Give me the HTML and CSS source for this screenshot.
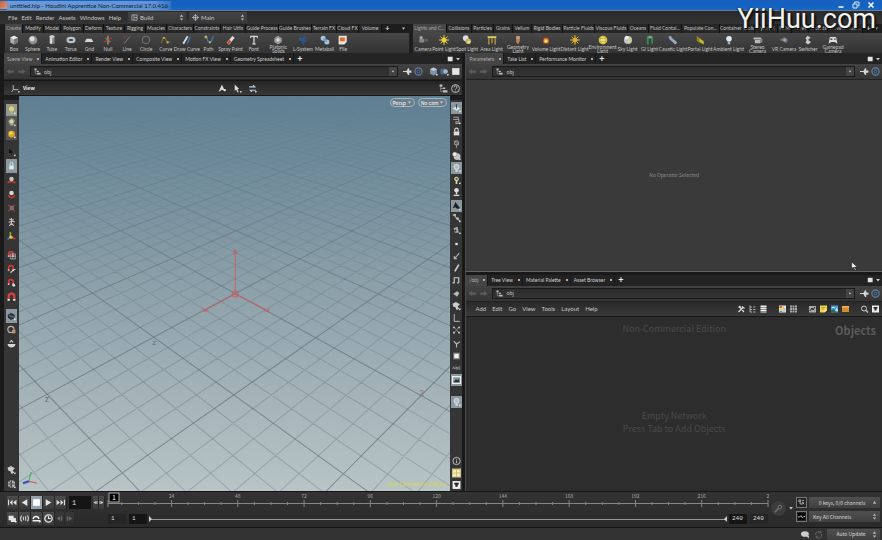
FILE: index.html
```html
<!DOCTYPE html>
<html lang="en">
<head>
<meta charset="utf-8">
<title>untitled.hip - Houdini Apprentice Non-Commercial 17.0.416</title>
<link rel="stylesheet" href="styles.css">
</head>
<body>
<header class="titlebar">
  <span class="app-icon"></span>
  <h1>untitled.hip - Houdini Apprentice Non-Commercial 17.0.416</h1>
  <div class="window-buttons">
    <button aria-label="Minimize" data-icon="min"></button>
    <button aria-label="Restore" data-icon="restore"></button>
    <button aria-label="Close" data-icon="close"></button>
  </div>
</header>
<nav class="menubar">
  <div class="menus">
    <button>File</button><button>Edit</button><button>Render</button><button>Assets</button><button>Windows</button><button>Help</button>
  </div>
  <button class="combo"><i data-icon="layout"></i><span>Build</span><i data-icon="spin"></i></button>
  <button class="combo"><i data-icon="target"></i><span>Main</span><i data-icon="spin"></i></button>
</nav>
<section class="shelves">
  <div class="shelf shelf-create">
    <div class="shelf-tabs" id="tabs-create"></div>
    <div class="shelf-tools" id="tools-create"></div>
  </div>
  <div class="shelf shelf-lights">
    <div class="shelf-tabs" id="tabs-lights"></div>
    <div class="shelf-tools" id="tools-lights"></div>
  </div>
</section>
<main class="desktop">
  <section class="pane scene">
    <div class="pane-tabs">
      <button class="on">Scene View</button><button>Animation Editor</button><button>Render View</button><button>Composite View</button><button>Motion FX View</button><button>Geometry Spreadsheet</button>
      <b class="plus">+</b><span class="pane-ctl"><i data-icon="square"></i><i data-icon="down"></i></span>
    </div>
    <div class="path">
      <i data-icon="back"></i><i data-icon="fwd"></i>
      <label class="path-box"><i data-icon="objnet"></i><input value="obj" aria-label="Scene path"><i class="drop" data-icon="down"></i></label>
      <i data-icon="pin"></i><i data-icon="ring"></i>
      <span class="path-tools"><i data-icon="cube"></i><i data-icon="cube2"></i><i data-icon="square"></i></span>
    </div>
    <div class="viewbar">
      <i data-icon="axes"></i><b>View</b>
      <span class="viewbar-mid"><i data-icon="snapA"></i><i data-icon="cursor"></i><i data-icon="swap"></i></span>
      <i data-icon="objnet"></i><i data-icon="help"></i>
    </div>
    <div class="view-row">
      <div class="toolbar toolbar-left" id="toolbar-left"></div>
      <div class="viewport">
        <svg id="grid" class="grid" viewBox="19 96 431 395" preserveAspectRatio="xMidYMid slice" aria-hidden="true"></svg>
        <div class="camera-menus"><button>Persp<i data-icon="down"></i></button><button>No cam<i data-icon="down"></i></button></div>
        <p class="license">Non-Commercial Edition</p>
      </div>
      <div class="toolbar toolbar-right" id="toolbar-right"></div>
    </div>
  </section>
  <div class="side">
    <section class="pane params">
      <div class="pane-tabs">
        <button class="on">Parameters</button><button>Take List</button><button>Performance Monitor</button>
        <b class="plus">+</b><span class="pane-ctl"><i data-icon="square"></i><i data-icon="down"></i></span>
      </div>
      <div class="path">
        <i data-icon="back"></i><i data-icon="fwd"></i>
        <label class="path-box"><i data-icon="objnet"></i><input value="obj" aria-label="Parameter path"><i class="drop" data-icon="down"></i></label>
        <i data-icon="pin"></i><i data-icon="ring"></i>
      </div>
      <div class="params-body">No Operator Selected<i class="pointer" data-icon="pointer"></i></div>
    </section>
    <section class="pane network">
      <div class="pane-tabs">
        <button class="on">/obj</button><button>Tree View</button><button>Material Palette</button><button>Asset Browser</button>
        <b class="plus">+</b><span class="pane-ctl"><i data-icon="square"></i><i data-icon="down"></i></span>
      </div>
      <div class="path">
        <i data-icon="back"></i><i data-icon="fwd"></i>
        <label class="path-box"><i data-icon="objnet"></i><input value="obj" aria-label="Network path"><i class="drop" data-icon="down"></i></label>
        <i data-icon="pin"></i><i data-icon="ring"></i>
      </div>
      <div class="net-menu">
        <div class="menus"><button>Add</button><button>Edit</button><button>Go</button><button>View</button><button>Tools</button><button>Layout</button><button>Help</button></div>
        <div class="net-icons">
          <span><i data-icon="wrench"></i><i data-icon="tree"></i><i data-icon="list"></i></span>
          <span><i data-icon="colors"></i><i data-icon="dots"></i></span>
          <span><i data-icon="shape"></i><i data-icon="note"></i><i data-icon="image"></i><i data-icon="box3"></i></span>
          <span><i data-icon="search"></i><i data-icon="disk"></i></span>
        </div>
      </div>
      <div class="net-body">
        <p>Non-Commercial Edition</p>
        <h2>Objects</h2>
        <p class="hint">Empty Network<br>Press Tab to Add Objects</p>
      </div>
    </section>
  </div>
</main>
<footer class="playbar">
  <div class="transport">
    <div class="buttons">
      <button aria-label="First frame" data-icon="first"></button><button aria-label="Play back" data-icon="rev"></button><button class="on" aria-label="Stop" data-icon="stop"></button><button aria-label="Play" data-icon="play"></button><button aria-label="Last frame" data-icon="last"></button>
      <input class="num frame" value="1" aria-label="Current frame">
      <button class="step" aria-label="Step back" data-icon="stepb"></button><button class="step" aria-label="Step forward" data-icon="stepf"></button>
    </div>
    <div class="buttons">
      <button aria-label="Realtime" data-icon="hand"></button><button aria-label="Audio" data-icon="audio"></button><button aria-label="Loop" data-icon="loop"></button><button aria-label="Playback options" data-icon="clock"></button>
      <button class="dim" aria-label="Previous key" data-icon="stepb"></button><button class="dim" aria-label="Next key" data-icon="stepf"></button>
    </div>
  </div>
  <div class="time">
    <svg id="ruler" class="ruler"></svg>
    <div class="range">
      <input class="num flat" value="1" aria-label="Global start"><input class="num" value="1" aria-label="Range start">
      <span class="range-bar"></span>
      <input class="num" value="240" aria-label="Range end"><input class="num flat" value="240" aria-label="Global end">
    </div>
  </div>
  <div class="key"><i data-icon="key"></i><i data-icon="down"></i></div>
  <div class="channels">
    <button class="sq" aria-label="Scope channels" data-icon="scope"></button><button class="chan"><span>0 keys, 0/0 channels</span><i data-icon="up"></i></button>
    <button class="sq" aria-label="Channel list" data-icon="wave"></button><button class="chan left"><span>Key All Channels</span><i data-icon="spin"></i></button>
  </div>
</footer>
<div class="status"><i data-icon="bubble"></i><i data-icon="refresh"></i><button class="chan"><span>Auto Update</span><i data-icon="spin"></i></button></div>
<div class="brand">YiiHuu.com</div>
<script src="app.js"></script>
</body>
</html>
```
FILE: styles.css
```css
* { box-sizing: border-box; }
body {
  margin: 0; height: 100vh; display: flex; flex-direction: column; overflow: hidden; position: relative;
  background: #2d2d2d; color: #c6c6c6;
  font: 5px/8px "Noto Sans CJK SC", "Noto Sans", sans-serif;
}
button, input { font: inherit; color: inherit; background: none; border: 0; margin: 0; padding: 0; }
h1, h2, p { margin: 0; font: inherit; }
i { display: inline-flex; flex: none; width: 9px; height: 9px; }
i svg, button svg { display: block; width: 100%; height: 100%; }
.titlebar, .menubar, .menus, .shelves, .pane-tabs { font-family: Lato, "Noto Sans", sans-serif; }

.titlebar { height: 11px; flex: none; display: flex; align-items: center; background: linear-gradient(#1a5fbd, #1263c4 60%, #1c69c0); border-bottom: 1px solid #5f7d9c; }
.app-icon { width: 7px; height: 8px; background: linear-gradient(135deg, #c9603a, #d99a78); }
.titlebar h1 { padding: 0 3px; color: #0c1930; background: linear-gradient(90deg, #6d9bd6, #5f93d6 90%, #3275c6); font-size: 6px; line-height: 9px; }
.window-buttons { margin-left: auto; display: flex; gap: 7px; padding-right: 7px; height: 8px; }
.window-buttons button { width: 8px; height: 8px; }

.menubar { height: 13px; flex: none; display: flex; align-items: center; padding-left: 8px; gap: 3px; background: linear-gradient(#2a2a2a, #343434); font-size: 6px; }
.menus { display: flex; gap: 4px; font-size: 6px; }
.menubar .menus { width: 117px; }
.combo { width: 58px; height: 11px; padding: 0 1px 0 3px; display: flex; align-items: center; gap: 2px; background: linear-gradient(#444, #383838); border-radius: 1px; }
.combo span { flex: 1; text-align: left; }
.combo i { width: 7px; height: 7px; }

.shelves { height: 29px; flex: none; display: flex; background: #1d1d1d; padding-left: 5px; gap: 4px; }
.shelf { min-width: 0; display: flex; flex-direction: column; }
.shelf-create { flex: 404; }
.shelf-lights { flex: 469; }
.shelf-tabs, .shelf-tools { display: grid; }
.shelf-tabs { height: 9px; font-size: 5px; }
.shelf-tabs > * { height: 9px; line-height: 9px; white-space: nowrap; overflow: hidden; border-right: 1px solid #111; background: #262626; }
.shelf-tabs .on { background: #464646; color: #aaa; }
.shelf-tabs b { display: flex; align-items: center; justify-content: space-between; padding: 0 3px; border: 0; color: #ddd; font-size: 8px; background: #1d1d1d; }
.shelf-tabs b i { width: 5px; height: 5px; }
.shelf-tools { height: 20px; background: linear-gradient(#474747, #333); font-size: 5px; }
.shelf-tools button { min-width: 0; height: 20px; display: flex; flex-direction: column; align-items: center; line-height: 4px; white-space: nowrap; padding-top: 2px; gap: 2px; }
.shelf-tools button.two { gap: 0; }
.shelf-tools i { width: 10px; height: 10px; }
#tabs-create { grid-template-columns: 18fr 21fr 17fr 23fr 20fr 21fr 21fr 21fr 27fr 27fr 25fr 33fr 33fr 25fr 22fr 23fr 27fr; }
#tools-create { grid-template-columns: 18fr 19fr 19fr 19fr 18fr 19fr 19fr 19fr 20fr 22fr 21fr 23fr 23fr 26fr 23fr 20fr 17fr 57fr; }
#tabs-lights { grid-template-columns: 34fr 25fr 22fr 19fr 19fr 31fr 32fr 33fr 21fr 33fr 38fr 35fr 23fr 14fr 17fr 19fr 35fr 19fr; }
#tools-lights { grid-template-columns: 20fr 22fr 24fr 25fr 28fr 28fr 29fr 27fr 23fr 21fr 26fr 28fr 29fr 29fr 24fr 24fr 26fr 36fr; }

.desktop { flex: 1; min-height: 0; display: flex; gap: 3px; background: #191919; padding-left: 4px; border-bottom: 1px solid #161616; }
.pane { display: flex; flex-direction: column; min-height: 0; min-width: 0; }
.scene { flex: 459; }
.side { flex: 416; min-width: 0; display: flex; flex-direction: column; border-left: 1px solid #4a4a4a; }
.params { flex: 218; border-bottom: 1px solid #626262; }
.network { flex: 217; margin-top: 3px; }
.pane-tabs { height: 11px; flex: none; display: flex; align-items: center; background: #232323; color: #d0d0d0; }
.pane-tabs button { height: 11px; display: flex; align-items: center; gap: 5px; padding: 0 2px 0 3px; white-space: nowrap; border-right: 1px solid #171717; }
.pane-tabs button::after { content: ""; width: 2px; height: 2px; background: #aaa; }
.pane-tabs .on { background: #454545; color: #b0b0b0; }
.plus { font-size: 9px; padding-left: 3px; color: #eee; }
.pane-ctl { margin-left: auto; display: flex; gap: 2px; padding-right: 1px; }
.pane-ctl i { width: 6px; height: 6px; }
.path { height: 16px; flex: none; display: flex; align-items: center; gap: 2px; padding: 0 2px; background: linear-gradient(#424242, #353535); border-bottom: 1px solid #222; }
.path-box { flex: 1; min-width: 0; height: 11px; margin: 0 3px 0 2px; display: flex; align-items: center; gap: 3px; padding-left: 3px; border: 1px solid #191919; background: linear-gradient(#2c2c2c, #343434); }
.path-box input { flex: 1; min-width: 0; height: 8px; }
.path-box i { width: 7px; height: 7px; }
.path-box .drop { width: 8px; height: 9px; padding: 2px; background: #444; }
.path-tools { display: flex; gap: 2px; padding-left: 4px; }
.viewbar { height: 16px; flex: none; display: flex; align-items: center; gap: 3px; padding: 0 2px 0 7px; background: linear-gradient(#252525, #383838); border: solid #171717; border-width: 1px 0; }
.viewbar b { color: #eee; }
.viewbar-mid { flex: 1; display: flex; justify-content: center; gap: 6px; }
.view-row { flex: 1; min-height: 0; display: flex; }
.toolbar { flex: none; display: flex; flex-direction: column; background: #353535; border-top: 4px solid #1c1c1c; }
.toolbar button { display: block; width: 11px; padding: 1px; }
.toolbar button.on { background: #8b989e; }
.toolbar div:last-child { margin-top: auto; }
.toolbar-left { width: 15px; gap: 5px; padding: 4px 2px 0; }
.toolbar-left button { height: 14px; padding: 2px 1px; }
.toolbar-left div:first-child button { height: 12px; padding: 1px; background: #555; }
.toolbar-left div:first-child button.on { background: #939a8e; }
.toolbar-right { width: 12px; gap: 2px; padding: 2px 0 0 1px; }
.toolbar-right button { height: 12px; }
.toolbar-right div:nth-child(6) { padding-top: 8px; }
.viewport { flex: 1; min-width: 0; position: relative; background: linear-gradient(#5f8093, #8097a2 35%, #98aab1 62%, #b8c4c6); }
.grid { position: absolute; inset: 0; width: 100%; height: 100%; }
.minor { stroke: #4f6270; stroke-opacity: .3; fill: none; }
.major { stroke: #3a4a58; stroke-opacity: .45; fill: none; }
.axis { stroke: #d2585c; stroke-width: 1; stroke-opacity: .85; fill: none; }
.grid text { font-family: "Liberation Sans", sans-serif; fill: #555a7c; text-anchor: middle; }
.grid .warm { fill: #96606c; }
.camera-menus { position: absolute; top: 2px; right: 3px; display: flex; gap: 3px; }
.camera-menus button { height: 9px; display: flex; align-items: center; gap: 1px; padding: 0 2px; border: 1px solid #a5b4bd; border-radius: 5px; color: #fff; background: #6b7d88; }
.camera-menus i { width: 5px; height: 5px; }
.license { position: absolute; right: 5px; bottom: 3px; color: #dcdc3c; }

.params-body { flex: 1; display: flex; align-items: center; justify-content: center; background: #3a3a3a; color: #8c8c8c; position: relative; }
.pointer { position: absolute; right: 23px; bottom: 0; }
.net-menu { height: 15px; flex: none; display: flex; align-items: center; justify-content: space-between; padding: 0 2px 0 9px; background: linear-gradient(#2a2a2a, #393939); border-bottom: 1px solid #181818; }
.net-menu .menus { gap: 6px; }
.net-icons, .net-icons span { display: flex; gap: 2px; }
.net-icons { gap: 10px; }
.net-icons i { width: 9px; height: 8px; }
.net-body { flex: 1; background: #2d2d2d; color: #4a4a4a; position: relative; text-align: center; font-size: 9px; line-height: 13px; padding-top: 5px; }
.net-body h2 { position: absolute; right: 6px; top: 6px; font-weight: bold; font-size: 11px; line-height: 14px; color: #5b5b5b; }
.hint { padding-top: 74px; }

.playbar { height: 36px; flex: none; display: flex; padding: 4px 2px 0 7px; border-bottom: 1px solid #151515; background: linear-gradient(#333, #2a2a2a); }
.transport { display: flex; flex-direction: column; gap: 3px; width: 101px; flex: none; }
.buttons { display: flex; align-items: center; height: 13px; }
.buttons button { width: 12px; height: 13px; padding: 1px; background: linear-gradient(#4b4b4b, #3a3a3a); border-right: 1px solid #242424; }
.buttons .on { background: #93a3ae; }
.buttons .step { width: 6px; padding: 1px 0; }
.buttons .dim { width: 10px; opacity: .35; }
.num { width: 18px; height: 10px; background: #151515; color: #ddd; padding: 0 3px; font: 6px/10px "Liberation Mono", monospace; border: 0; }
.num.flat { background: #252525; }
.num.frame { width: 22px; height: 13px; margin: 0 2px; font-size: 7px; }
.time { flex: 1; min-width: 0; }
.ruler { display: block; width: 100%; height: 18px; overflow: visible; margin-top: -3px; }
.ruler line { stroke: #858585; }
.ruler text { fill: #aaa; text-anchor: middle; }
.range { display: flex; align-items: center; gap: 3px; height: 12px; padding-top: 2px; margin-top: 1px; }
.range-bar { flex: 1; height: 1px; background: #999; position: relative; }
.range-bar::before, .range-bar::after { content: ""; position: absolute; top: -3px; border: solid transparent; border-width: 3px 0; }
.range-bar::before { left: -1px; border-left: 3px solid #ccc; }
.range-bar::after { right: -1px; border-right: 3px solid #ccc; }
.key { width: 28px; flex: none; display: flex; align-items: center; justify-content: center; gap: 2px; height: 24px; }
.key i { width: 6px; height: 6px; }
.key i:first-child { width: 15px; height: 15px; }
.channels { display: grid; grid-template-columns: 11px 71px; gap: 3px 2px; height: 27px; padding: 1px 0; }
.sq { height: 11px; padding: 1px; border: 1px solid #777; background: #222; }
.chan { height: 11px; display: flex; align-items: center; background: linear-gradient(#505050, #404040); color: #dadada; border-radius: 1px; padding: 0 2px 0 4px; }
.chan span { flex: 1; }
.chan.left span { text-align: left; }
.chan i { width: 7px; height: 7px; }
.status { height: 12px; flex: none; display: flex; align-items: center; justify-content: flex-end; gap: 4px; padding-right: 2px; background: #333; }
.status .chan { width: 53px; }
.brand { position: absolute; right: 6px; top: 3px; font: 27px/32px Roboto, sans-serif; color: #f2f2f2; text-shadow: 1px 1px 1px #111, -1px 0 1px #222, 2px 2px 2px #111; }
```
FILE: app.js
```js
const g = 'stroke="#c4c4c4" fill="none" stroke-width="1.6"';
const tri = '<path fill="#fff" d="M12 13h4l-2 3z"/>';
const magnet = '<path d="M3 10V6a4 4 0 0 1 8 0v4" fill="none" stroke="#cf3a34" stroke-width="3"/><path d="M1.500 10h3M9.500 10h3" stroke="#ddd" stroke-width="2"/>';
const bulb = c => `<circle cx="8" cy="6" r="4.500" fill="${c}"/><path d="M6 10h4v5H6z" fill="#aab"/>`;
const rays = c => `<path stroke="${c}" stroke-width="1.600" d="M8 0v16M0 8h16M2.500 2.500l11 11M13.500 2.500l-11 11"/><circle cx="8" cy="8" r="4" fill="${c}"/>`;
const icons = {
  min: '<path d="M3 12h10" stroke="#fff" stroke-width="3"/>',
  restore: '<path d="M5 5V2h9v8h-3M2 6h8v8H2z" fill="none" stroke="#dce8f6" stroke-width="2"/>',
  close: '<path d="M3 3l10 10M13 3L3 13" stroke="#fff" stroke-width="3"/>',
  layout: `<path d="M2 2h12v12H2zM7 2v12M7 8h7" ${g}/>`,
  target: `<circle cx="8" cy="8" r="5" ${g}/><path d="M8 0v16M0 8h16" ${g}/>`,
  spin: '<path fill="#bbb" d="M8 1l4 5H4zM8 15l4-5H4z"/>',
  up: '<path fill="#aaa" d="M8 4l4 7H4z"/>',
  down: '<path fill="#ccc" d="M3 5h10l-5 7z"/>',
  square: '<path fill="#e4e4e4" d="M2 2h13v12H2z"/>',
  back: '<path fill="#5c5c5c" d="M1 8l6-5v3h7v4H7v3z"/>',
  fwd: '<path fill="#5c5c5c" d="M15 8L9 3v3H2v4h7v3z"/>',
  objnet: '<path fill="#bdbdbd" d="M1 1h5v4H1zM7 6h4v3H7zM7 11h8v4H7z"/><path d="M3 5v8h4M3 8h4" stroke="#bbb" fill="none"/>',
  pin: '<path fill="#d5d5d5" d="M0 7h6l3-5h2v4h4v4h-4v4H9L6 9H0z"/>',
  ring: '<circle cx="8" cy="8" r="6.500" fill="#36424f" stroke="#64809d" stroke-width="2"/><circle cx="8" cy="8" r="2.500" fill="none" stroke="#5a85b5"/>',
  cube: '<path fill="#7f94aa" d="M2 4l6-3 6 3v8l-6 3-6-3z"/><path fill="#c0ccd8" d="M2 4l6-3 6 3-6 3z"/>' + tri,
  cube2: '<path fill="#4c6d93" d="M1 3h9v10H1z"/><circle cx="10" cy="8" r="4" fill="#a9b5c2"/>' + tri,
  axes: `<path d="M4 2v8h9M4 10l-3 4" ${g}/>` + tri,
  snapA: '<path fill="#ddd" d="M7 1l5 11-5-2-6 4z"/><circle cx="12" cy="11" r="2" fill="#eee"/>',
  cursor: '<path fill="#ddd" d="M3 1l8 8H8l2 5-2 1-2-5-3 2z"/>' + tri,
  swap: '<path d="M2 5h10l-3-3M14 11H4l3 3" fill="none" stroke="#bcd0e0" stroke-width="2"/>' + tri,
  help: `<circle cx="8" cy="8" r="7" ${g}/><path d="M5.500 6a2.500 2.500 0 1 1 3.500 2l-1 1v1M8 12v1.500" ${g}/>`,
  pointer: '<path fill="#fff" stroke="#111" d="M3 0v12l3-3 3 6 2-1-3-5h5z"/>',
  wrench: '<path d="M2 14l9-9M4 3l9 11M9 3l5 4M2 5l4-3" stroke="#ddd" stroke-width="2.400"/>',
  tree: `<path d="M3 1v13h4M3 4h4M3 9h4M9 4h5M9 9h5M9 14h5" ${g}/>`,
  list: '<path fill="#eee" d="M2 1h12v3H2zM2 5h12v3H2zM2 9h12v3H2zM2 13h12v2H2z"/>',
  colors: '<path fill="#eee" d="M1 1h14v14H1z"/><path fill="#d7593c" d="M2 2h5v4H2z"/><path fill="#e5c33c" d="M2 7h5v4H2zM8 2h4v4H8z"/><path fill="#4c8bc0" d="M2 12h5v2H2z"/><path stroke="#444" d="M8 8h6M8 12h6"/>',
  dots: '<path fill="#aaa" d="M1 1h4v4H1zM6 1h4v4H6zM11 1h4v4h-4zM1 6h4v4H1zM6 6h4v4H6zM11 6h4v4h-4zM1 11h4v4H1zM6 11h4v4H6zM11 11h4v4h-4z"/>',
  shape: '<path fill="#aaa" d="M1 2h14v13H1z"/><path d="M3 12l4-6 2 4 4-6" stroke="#222" fill="none" stroke-width="2"/>',
  note: '<path fill="#f1d54f" d="M1 1h14v9l-5 5H1z"/><path d="M4 5h8M4 8h5" stroke="#7b681a"/><path fill="#fff7c0" d="M10 10h5l-5 5z"/>',
  image: '<path fill="#4a9fdb" d="M1 1h14v14H1z"/><path fill="#d9ecf6" d="M3 4h5v2H3zM9 11l4-6 2 7z"/><path fill="#2e6b48" d="M1 11l5-3 6 7H1z"/>',
  box3: '<path fill="#d58a2c" d="M1 2h14v12H1z"/><path fill="#f0b565" d="M1 2h14v3H1z"/>',
  search: '<circle cx="7" cy="7" r="5" fill="none" stroke="#ccc" stroke-width="2"/><path d="M11 11l4 4" stroke="#ccc" stroke-width="3"/>',
  disk: '<path fill="#eee" d="M1 1h14v14H1z"/><path fill="#222" d="M4 4h8v3h-2v4H6V7H4z"/>',
  first: '<path fill="#ddd" d="M0 3h2v10H0zM8 3v10L3 8zM15 3v10l-6-5z"/>',
  last: '<path fill="#ddd" d="M14 3h2v10h-2zM8 3v10l5-5zM1 3v10l6-5z"/>',
  rev: '<path fill="#e5e5e5" d="M13 2v12L3 8z"/>',
  play: '<path fill="#e5e5e5" d="M3 2v12l10-6z"/>',
  stop: '<path fill="#fff" d="M2 2h12v12H2z"/>',
  stepb: '<path fill="#ddd" d="M9 3v10L2 8zM11 3h3v10h-3z"/>',
  stepf: '<path fill="#ddd" d="M7 3v10l7-5zM2 3h3v10H2z"/>',
  hand: '<path fill="#e6e6e6" d="M1 3h9v4h4v7H5v-3H1z"/>' + tri,
  audio: '<path d="M3 3a8 8 0 0 0 0 10M13 3a8 8 0 0 1 0 10M6 5v6M10 4v8" fill="none" stroke="#ccc" stroke-width="2"/>',
  loop: '<path d="M1 12h14M2 9c1-6 10-6 10 0" fill="none" stroke="#eee" stroke-width="2.500"/>' + tri,
  clock: '<circle cx="8" cy="8" r="6.500" fill="none" stroke="#ddd" stroke-width="2.500"/><path d="M8 4v4h4" stroke="#eee" stroke-width="2" fill="none"/>',
  key: '<circle cx="8" cy="8" r="8" fill="#3b3b3b"/><circle cx="9.500" cy="6.500" r="2" stroke="#777" fill="none"/><path d="M8 8l-4 4" stroke="#777" stroke-width="1.500"/>',
  scope: '<path d="M2 2h4v4H2zM9 3h5M3 9h4v4M9 7l5 5M9 13l5-6" fill="none" stroke="#ccc" stroke-width="1.800"/>',
  wave: '<path fill="#000" d="M0 0h16v16H0z"/><path d="M0 9h4l3-3 3 5 3-3h3" stroke="#ddd" stroke-width="2" fill="none"/>',
  bubble: '<ellipse cx="7" cy="7" rx="7" ry="5" fill="#ccc"/><path fill="#ccc" d="M9 10h5v5z"/>',
  refresh: '<path d="M3 9a5 5 0 0 1 9-4M13 7a5 5 0 0 1-9 5M12 1v4H8M4 15v-4h4" fill="none" stroke="#666" stroke-width="1.600"/>',
  box: '<path fill="#a9adb0" d="M2 4l6-3 6 3v8l-6 3-6-3z"/><path fill="#e6e8ea" d="M2 4l6-3 6 3-6 3z"/><path fill="#777b7f" d="M8 7l6-3v8l-6 3z"/>',
  sphere: '<circle cx="8" cy="8" r="7" fill="#8d8f91"/><circle cx="6.500" cy="6" r="4" fill="#dcdedf"/>',
  tube: '<path fill="#8b8e91" d="M4 2h8v12H4z"/><path fill="#dedede" d="M5 2h3v12H5z"/><ellipse cx="8" cy="2.500" rx="4" ry="2" fill="#d4d4d4"/>',
  torus: '<ellipse cx="8" cy="8" rx="5.500" ry="3.500" fill="none" stroke="#b9c3cd" stroke-width="3.500"/>',
  gridi: '<path fill="#d6d6d6" d="M4 6h8l3 5H1z"/>',
  null: '<path d="M8 1v14" stroke="#d4a02e" stroke-width="2"/><path d="M2 11l12-6" stroke="#b33" stroke-width="2"/><path d="M4 5l8 6" stroke="#488bc4" stroke-width="2"/>',
  line: '<path d="M3 14L13 2" stroke="#7a7a7a" stroke-width="1.500"/><circle cx="4" cy="4" r="1.500" fill="#a33"/>',
  circle: '<circle cx="8" cy="8" r="6" fill="none" stroke="#777" stroke-width="1.500"/>',
  curve: '<path d="M1 13C3 0 7 3 8 8s4 6 7 2" fill="none" stroke="#8d7c34" stroke-width="1.500"/><path fill="#d9b637" d="M3 3h3v3H3zM9 10h3v3H9z"/>',
  draw: '<path d="M2 14L9 2" stroke="#d7dadd" stroke-width="3"/><path d="M8 14c3-2 1-7 6-11" fill="none" stroke="#2f83c2" stroke-width="2"/>',
  pathi: '<path d="M2 3c5 0 2 9 7 9s3-8 6-10" fill="none" stroke="#3483bf" stroke-width="2"/><path fill="#d4b03a" d="M1 1h4v4H1zM8 10h3v3H8z"/>',
  spray: '<path d="M3 14L12 3" stroke="#ddd" stroke-width="5"/><path d="M3 14l4-5" stroke="#c8472e" stroke-width="4"/>',
  font: '<path fill="#ddd" d="M2 1h12v4h-1l-1-2H9v10l2 1v1H5v-1l2-1V3H4L3 5H2z"/>',
  plat: '<path fill="#9b9b9b" d="M8 1l6 4v6l-6 4-6-4V5z"/><path fill="#dcdcdc" d="M8 4l3 4-3 3-3-3z"/>',
  lsys: '<path d="M8 15V3M8 9L3 5M8 7l5-4M8 12l5-3M3 9V4" stroke="#2d598f" stroke-width="2.500" fill="none"/><circle cx="8" cy="5" r="5" fill="none" stroke="#31568a"/>',
  meta: '<circle cx="5" cy="5" r="4" fill="#a7c7e2"/><circle cx="11" cy="11" r="4" fill="#a7c7e2"/><path d="M5 5l6 6" stroke="#7ba6cc" stroke-width="3"/>',
  file: '<path fill="#e8e4dc" d="M1 1h13v10l-4 4H1z"/><path fill="#df6c2b" d="M3 4h8v6H3z"/>',
  camera: '<path fill="#85888b" d="M2 6h8v6H2z"/><path fill="#63676b" d="M10 8l5-3v7z"/><circle cx="5" cy="4" r="2.500" fill="#aaa"/>',
  point: rays('#e8cf3c'), distant: rays('#d9ae2c'),
  spot: '<circle cx="6" cy="5" r="4.500" fill="#ddd"/><circle cx="10" cy="10" r="4.500" fill="#c5b36b"/><circle cx="11" cy="11" r="2" fill="#f2e37d"/>',
  area: '<path fill="#e4cf5a" d="M1 2h14v3H1z"/><path d="M3 5v10M8 5v8M13 5v10" stroke="#b7a443" stroke-width="2"/>',
  geo: '<path fill="#b98061" d="M5 2h6v7l-3 6-3-4z"/><circle cx="8" cy="4" r="3" fill="#cc9a78"/>',
  volume: '<path fill="#833a28" d="M3 3h10v12H3z"/><circle cx="8" cy="9" r="4" fill="#ef9d3c"/><circle cx="8" cy="10" r="2" fill="#ffe67a"/>',
  env: '<circle cx="8" cy="8" r="7" fill="#d8c43b"/><circle cx="8" cy="8" r="4" fill="#f4efad"/><path d="M3 6h10M3 10h10" stroke="#9a8928"/>',
  sky: '<circle cx="8" cy="8" r="6.500" fill="#bdc5cb"/><circle cx="6" cy="4" r="3" fill="#eee"/><circle cx="10" cy="9" r="2.500" fill="#e5d259"/>',
  gi: '<path fill="#3a8856" d="M3 3l5-2 5 2v11h-3V6H6v9H3z"/><path fill="#72b386" d="M3 3l5-2 5 2-5 2z"/>',
  caustic: '<path d="M3 2c0 6 6 6 10 12" stroke="#98a9c7" stroke-width="4.500" fill="none"/>',
  portal: '<path fill="#c6b92d" d="M3 2l11 8v5L3 9z"/><path fill="#8c8325" d="M3 2v7l4 4V5z"/>',
  ambient: bulb('#d9ecf0'),
  stereo: '<path fill="#b9b9b9" d="M1 4h12v3H1zM3 8h9v5H3z"/><path fill="#888" d="M11 6h4v6h-4z"/>',
  vr: '<path fill="#707a82" d="M1 8l8-5 5 4-2 6-6-3z"/><circle cx="9" cy="8" r="2" fill="#aab"/>',
  switcher: '<path fill="#ccc" d="M7 1l5 3-4 4 5 3-5 4-4-3 2-4-2-3z"/>',
  pad: '<path fill="#ddd" d="M3 3h10l2 11-4-3H5l-4 3z"/><path fill="#555" d="M4 5h3v3H4zM10 5h2v3h-2z"/>',
  selObj: bulb('#e1d36c') + tri, selGeo: '<path fill="#a5a489" d="M8 1l6 4-3 9H6L2 6z"/><circle cx="8" cy="7" r="3" fill="#ddd9a4"/>' + tri,
  selDyn: '<circle cx="8" cy="8" r="6" fill="#dba91e"/><circle cx="7" cy="6" r="3" fill="#f2d24e"/>' + tri,
  arrow: '<path fill="#0a0a0a" stroke="#888" stroke-width=".500" d="M3 0v13l3-3 3 6 2-1-3-5h5z"/>' + tri,
  lockv: '<path fill="#dfe8ec" d="M4 7h8v7H4z"/><path d="M5.500 7V4a2.500 2.500 0 0 1 5 0v3" fill="none" stroke="#dfe8ec" stroke-width="1.600"/>',
  move: '<path d="M1 13l6-3 8 3" stroke="#c93b30" stroke-width="3" fill="none"/><circle cx="8" cy="6" r="4" fill="#c9c2bd"/>',
  rotate: '<path d="M2 10c3 6 9 6 12 0" stroke="#c93b30" stroke-width="2.500" fill="none"/><circle cx="8" cy="6" r="4" fill="#d8d8d3"/>',
  scale: '<path fill="#776d6a" d="M5 4h7v8H5z"/><path d="M2 3l3 2M14 3l-3 2M2 14l3-3M14 14l-3-3" stroke="#b93932" stroke-width="2"/>',
  pose: '<path d="M8 1v5l-5 3M8 6l6 2M8 6v4l-4 5M8 10l4 5M4 3l8 1" stroke="#ccb9b9" stroke-width="2" fill="none"/>',
  handle: '<path d="M6 1v9" stroke="#77b53e" stroke-width="3"/><path d="M6 10l9 3" stroke="#cf3b33" stroke-width="3"/><path d="M6 10l-5 4" stroke="#4679c4" stroke-width="3"/><circle cx="7" cy="10" r="3" fill="#e1c93f"/>',
  snapGrid: magnet + '<path d="M6 6h9v9H6zM10 6v9M6 10h9" stroke="#ddd" fill="none"/>',
  snapCurve: magnet + '<path d="M6 14c4 0 4-6 9-5" stroke="#ddd" fill="none" stroke-width="2"/>',
  snapPt: magnet + '<circle cx="12" cy="12" r="2.500" fill="#ddd"/>',
  snapMulti: '<path d="M3 13V7a5 5 0 0 1 10 0v6" fill="none" stroke="#d8433c" stroke-width="4"/><path d="M1 13h4M11 13h4" stroke="#eee" stroke-width="3"/>',
  cam2: '<path fill="#27343d" d="M1 6l6-4 7 4-1 6-6 3-5-4z"/><path d="M4 7l8 3" stroke="#67747d" stroke-width="2"/>' + tri,
  look: '<circle cx="7" cy="7" r="5.500" fill="none" stroke="#bbb" stroke-width="2"/><path fill="#c28e6a" d="M9 8h6v6H9z"/>',
  bowl: '<path fill="#d6d8d8" d="M1 8h14c0 8-14 8-14 0z"/><path d="M5 5l3-3 3 3" stroke="#ccc" fill="none" stroke-width="2"/>',
  leafy: '<path fill="#ccc" d="M1 4l6-3 7 4-4 4 3 4-5 2-2-5-4-1z"/>' + tri,
  globe: '<circle cx="8" cy="8" r="6.500" fill="#aaa"/><path d="M2 8h12M8 1v14M4 3c4 4 4 7 0 11" stroke="#444" fill="none" stroke-width="1.500"/>' + tri,
  plane: '<path fill="#dfe5e8" d="M1 9l7-4 7 4-7 4z"/><path d="M8 1v8" stroke="#40505b" stroke-width="2"/>' + tri,
  layers: '<path d="M2 3h9v4H2M4 7h8v4H6M7 11v3h7" stroke="#999" fill="none" stroke-width="2"/>' + tri,
  lock: '<path fill="#ddd" d="M3 7h10v7H3z"/><path d="M5 7V4a3 3 0 0 1 6 0v3" fill="none" stroke="#ddd" stroke-width="2"/>',
  bulbOff: '<circle cx="8" cy="6" r="3.500" fill="none" stroke="#999" stroke-width="2"/><path d="M8 10v5M4 2l8 8" stroke="#aaa" stroke-width="1.500"/>',
  ball: '<circle cx="9" cy="9" r="6" fill="#c7c7c7"/><circle cx="5" cy="5" r="4" fill="#eee" stroke="#777"/>' + tri,
  bulbOn: '<path d="M6 11h4v4H6z" fill="#d5dde1"/><circle cx="8" cy="6" r="4.500" fill="#aebcc3" stroke="#e2eaee" stroke-width="1.500"/>' + tri,
  bulbY: '<circle cx="8" cy="6" r="4" fill="#ded9a6"/><circle cx="8" cy="6" r="2" fill="#554"/><path d="M8 10v5" stroke="#ddd" stroke-width="3"/>' + tri,
  bulbS: '<circle cx="8" cy="5" r="4" fill="#ddd"/><path d="M8 8v4M3 14h10" stroke="#ddd" stroke-width="2.500"/>',
  shade: '<path fill="#17232b" d="M6 1l4 5 5 7H9l-3-3-5 2 3-6z"/>' + tri,
  link: '<path d="M1 2l5 3 2 4 6 4" stroke="#aaa" stroke-width="2" fill="none"/><path fill="#ccc" d="M3 1h4v3H3zM8 7h4v3H8z"/>' + tri,
  bucket: '<path fill="#aaa" d="M3 5l7-3 2 11H5z"/><circle cx="6" cy="9" r="2" fill="#333"/>' + tri,
  dot: '<path fill="#eee" d="M6 6h4v4H6z"/>',
  vec: '<path d="M13 3L5 12M4 8v5h5" stroke="#bbb" stroke-width="1.800" fill="none"/>',
  slash: '<path d="M12 2L5 14" stroke="#ccc" stroke-width="3"/>',
  num: '<path d="M4 14V4h8v9M1 13h3M9 13h3" stroke="#ccc" stroke-width="2" fill="none"/>',
  flag: '<path fill="#bbb" d="M2 8l7-5 4 3-4 7-3-3z"/>',
  corner: `<path d="M4 1v13h10" ${g}/>`,
  pts: '<path d="M3 2l10 12M13 2L3 14" stroke="#888" stroke-width="1.500"/><path fill="#ccc" d="M2 2h3v3H2zM11 2h3v3h-3zM2 11h3v3H2zM11 11h3v3h-3z"/>',
  tripod: '<path d="M3 3l5 5 6-4M8 8v6" stroke="#bbb" stroke-width="2" fill="none"/>',
  solid: '<path fill="#777" d="M2 2h12v12H2z"/><path fill="#eee" d="M4 4h8v8H4z"/>',
  abc: '<path d="M1 10l2-4 2 4M7 5v5h3V7H7M15 6h-3v4h3" stroke="#999" fill="none" stroke-width="1.500"/>',
  pic: '<path fill="none" stroke="#eee" stroke-width="2" d="M1 2h14v12H1z"/><path fill="#27343c" d="M3 12l4-6 3 3 3-4v7z"/>',
  info: `<circle cx="8" cy="8" r="6.500" ${g}/><path d="M8 7v5M8 4v1.500" ${g}/>`,
  quad: '<path fill="#cfc27c" d="M0 0h16v16H0z"/><path fill="#f4eebf" d="M2 2h5v5H2zM9 2h5v5H9zM2 9h5v5H2zM9 9h5v5H9z"/>'
};
const svg = name => `<svg viewBox="0 0 16 16" aria-hidden="true">${icons[name] || ''}</svg>`;
const byId = id => document.getElementById(id);

function shelf(key, tabs, tools) {
  byId('tabs-' + key).innerHTML = tabs.map((t, n) => `<button class="${n ? '' : 'on'}">${t}</button>`).join('') + '<b>+<i data-icon="down"></i></b>';
  byId('tools-' + key).innerHTML = tools.map(([label, icon]) =>
    `<button class="${label.includes('<br>') ? 'two' : ''}"><i data-icon="${icon}"></i><span>${label}</span></button>`).join('');
}
shelf('create',
  ['Create', 'Modify', 'Model', 'Polygon', 'Deform', 'Texture', 'Rigging', 'Muscles', 'Characters', 'Constraints', 'Hair Utils', 'Guide Process', 'Guide Brushes', 'Terrain FX', 'Cloud FX', 'Volume'],
  [['Box', 'box'], ['Sphere', 'sphere'], ['Tube', 'tube'], ['Torus', 'torus'], ['Grid', 'gridi'], ['Null', 'null'], ['Line', 'line'], ['Circle', 'circle'], ['Curve', 'curve'], ['Draw Curve', 'draw'], ['Path', 'pathi'], ['Spray Paint', 'spray'], ['Font', 'font'], ['Platonic<br>Solids', 'plat'], ['L-System', 'lsys'], ['Metaball', 'meta'], ['File', 'file']]);
shelf('lights',
  ['Lights and C...', 'Collisions', 'Particles', 'Grains', 'Vellum', 'Rigid Bodies', 'Particle Fluids', 'Viscous Fluids', 'Oceans', 'Fluid Contai...', 'Populate Con...', 'Container Tools', 'Pyro FX', 'FEM', 'Wires', 'Crowds', 'Drive Simula...'],
  [['Camera', 'camera'], ['Point Light', 'point'], ['Spot Light', 'spot'], ['Area Light', 'area'], ['Geometry<br>Light', 'geo'], ['Volume Light', 'volume'], ['Distant Light', 'distant'], ['Environment<br>Light', 'env'], ['Sky Light', 'sky'], ['GI Light', 'gi'], ['Caustic Light', 'caustic'], ['Portal Light', 'portal'], ['Ambient Light', 'ambient'], ['Stereo<br>Camera', 'stereo'], ['VR Camera', 'vr'], ['Switcher', 'switcher'], ['Gamepad<br>Camera', 'pad']]);

// A leading * marks a tool that is switched on.
function toolbar(id, groups) {
  byId(id).innerHTML = groups.map(names => '<div>' + names.split(' ').map(n => {
    const on = n[0] === '*';
    const name = on ? n.slice(1) : n;
    return `<button class="${on ? 'on' : ''}" aria-label="${name}" data-icon="${name}"></button>`;
  }).join('') + '</div>').join('');
}
toolbar('toolbar-left', ['*selObj selGeo selDyn', 'arrow *lockv move rotate scale pose handle', 'snapGrid snapCurve snapPt snapMulti', '*cam2 look bowl', 'leafy globe']);
toolbar('toolbar-right', ['*plane layers lock bulbOff ball *bulbOn bulbY bulbS', '*shade link bucket', 'dot vec slash num', 'flag leafy corner pts', 'tripod solid abc *pic', '*bulbOn', 'info quad disk']);

document.querySelectorAll('[data-icon]').forEach(el => { el.innerHTML = svg(el.dataset.icon); });

// Ground plane seen in perspective; a and b count major grid cells.
const depth = (a, b) => 1 - 0.1186 * a - 0.1173 * b;
function project(a, b) {
  const w = depth(a, b);
  return [235 + (70.8 * a - 71.9 * b) / w, 293.5 + (38.9 * a + 38.5 * b) / w];
}
const point = (a, b) => project(a, b).map(v => v.toFixed(1)).join(' ');
let minor = '', major = '';
for (let n = -60; n <= 35; n++) {
  const c = n / 5;
  const end = (0.92 - 0.1186 * c) / 0.1186;
  const seg = `M${point(c, -12)}L${point(c, end)}M${point(-12, c)}L${point(end, c)}`;
  if (n % 5) minor += seg; else major += seg;
}
const marks = [[0, 1], [0, 2], [0, -1], [0, -2], [0, -3], [-2, 0], [-3, 0], [-4, 0], [2, 0]].map(([a, b]) => {
  const [x, y] = project(a, b);
  const near = a > 0 || b > 0;
  const size = Math.round(7 / depth(a, b));
  return `<text x="${x.toFixed(0)}" y="${(y + (b > 0 ? 8 : 1)).toFixed(0)}" font-size="${size}" class="${a ? 'warm' : ''}" opacity="${near ? 0.8 : 0.5}">${a > 0 ? '2' : b > 0 ? 'z' : '~'}</text>`;
}).join('');
byId('grid').innerHTML = `<defs><linearGradient id="fade" x2="0" y2="1"><stop offset="0" stop-color="#fff" stop-opacity="0"/><stop offset=".12" stop-color="#fff" stop-opacity=".2"/><stop offset=".35" stop-color="#fff" stop-opacity=".6"/><stop offset=".7" stop-color="#fff"/></linearGradient>
<mask id="m" maskUnits="userSpaceOnUse" x="19" y="96" width="431" height="395"><rect x="19" y="96" width="431" height="395" fill="url(#fade)"/></mask></defs>
<g mask="url(#m)"><path class="minor" d="${minor}"/><path class="major" d="${major}"/></g>${marks}
<path class="axis" d="M235 294V252M235 294L203 311M235 294L268 311M233 254l2-4 2 4M202 308l2 3h4M269 308l-1 3h-4"/><circle cx="235" cy="294" r="3" fill="none" class="axis"/>
<path d="M29 481l2-9M29 476l3-4" stroke="#43b864" fill="none"/><path d="M29 481l8 2" stroke="#d0545a"/><path d="M29 481l-6 2" stroke="#3b49c0" stroke-width="2"/>`;

// Timeline: ticks every 6 frames, numbers every 24.
let ruler = '<line x1="0" x2="100%" y1="10.500" y2="10.500"/>';
for (let f = 0; f <= 240; f += 6) {
  const x = Math.max(0, (f - 1) / 239 * 100).toFixed(2) + '%';
  const long = f % 24 === 0;
  ruler += `<line x1="${x}" x2="${x}" y1="${long ? 7 : 9}" y2="${long ? 14 : 12}"/>`;
  if (long && f) ruler += `<text x="${x}" y="5">${f === 240 ? 2 : f}</text>`;
}
byId('ruler').innerHTML = ruler + '<rect x="1" y="0" width="10" height="9" fill="#000" stroke="#aaa"/><text x="6" y="7" font-size="7" style="fill:#fff">1</text>';
```
